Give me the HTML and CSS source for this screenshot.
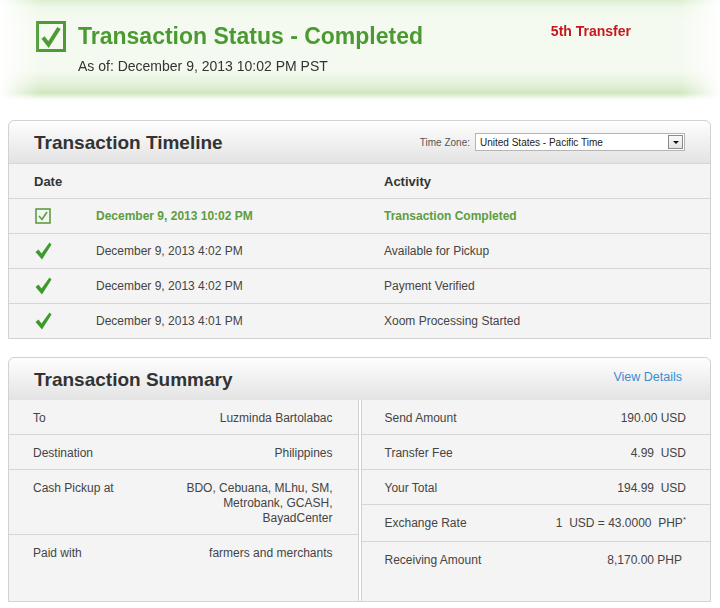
FILE: index.html
```html
<!DOCTYPE html>
<html lang="en">
<head>
    <meta charset="UTF-8">
    <title>Transaction Status</title>
    <link rel="stylesheet" href="styles.css">
</head>
<body>
    <div class="page">
        <div class="status-banner">
            <svg class="status-icon" width="30" height="31" viewBox="0 0 30 31">
                <rect x="1.5" y="1.5" width="27" height="28" fill="none" stroke="#4e9a34" stroke-width="3"/>
                <path d="M7 16.5 L12.5 23.5 L23 7" fill="none" stroke="#4e9a34" stroke-width="4" stroke-linejoin="miter"/>
            </svg>
            <div class="status-text">
                <h1>Transaction Status - Completed</h1>
                <p class="as-of">As of: December 9, 2013 10:02 PM PST</p>
            </div>
            <span class="transfer-tag">5th Transfer</span>
        </div>

        <div class="panel timeline">
            <div class="panel-head">
                <h2>Transaction Timeline</h2>
                <div class="tz">
                    <span class="tz-label">Time Zone:</span>
                    <div class="tz-select">
                        <span>United States - Pacific Time</span>
                        <span class="tz-arrow"></span>
                    </div>
                </div>
            </div>
            <div class="tl-row tl-head">
                <span class="tl-date-head">Date</span>
                <span></span>
                <span>Activity</span>
            </div>
            <div class="tl-row done">
                <span class="tl-icon">
                    <svg width="16" height="16" viewBox="0 0 16 16">
                        <rect x="1" y="1" width="14" height="14" fill="none" stroke="#5d9d41" stroke-width="1.6"/>
                        <path d="M4 8 L7 11.5 L12 4" fill="none" stroke="#5d9d41" stroke-width="1.6"/>
                    </svg>
                </span>
                <span>December 9, 2013 10:02 PM</span>
                <span>Transaction Completed</span>
            </div>
            <div class="tl-row">
                <span class="tl-icon"><svg width="17" height="18" viewBox="0 0 17 18"><path d="M0.5 10 L3.5 7.5 L6.5 11.5 L14.5 0.5 L16.5 2.5 L7 17.5 Z" fill="#3f9a2d"/></svg></span>
                <span>December 9, 2013 4:02 PM</span>
                <span>Available for Pickup</span>
            </div>
            <div class="tl-row">
                <span class="tl-icon"><svg width="17" height="18" viewBox="0 0 17 18"><path d="M0.5 10 L3.5 7.5 L6.5 11.5 L14.5 0.5 L16.5 2.5 L7 17.5 Z" fill="#3f9a2d"/></svg></span>
                <span>December 9, 2013 4:02 PM</span>
                <span>Payment Verified</span>
            </div>
            <div class="tl-row">
                <span class="tl-icon"><svg width="17" height="18" viewBox="0 0 17 18"><path d="M0.5 10 L3.5 7.5 L6.5 11.5 L14.5 0.5 L16.5 2.5 L7 17.5 Z" fill="#3f9a2d"/></svg></span>
                <span>December 9, 2013 4:01 PM</span>
                <span>Xoom Processing Started</span>
            </div>
        </div>

        <div class="panel summary">
            <div class="panel-head">
                <h2>Transaction Summary</h2>
                <a class="details-link" href="#">View Details</a>
            </div>
            <div class="summary-body">
                <div class="summary-col left">
                    <div class="sum-row"><span>To</span><span class="val">Luzminda Bartolabac</span></div>
                    <div class="sum-row"><span>Destination</span><span class="val">Philippines</span></div>
                    <div class="sum-row"><span>Cash Pickup at</span><span class="val">BDO, Cebuana, MLhu, SM,<br>Metrobank, GCASH,<br>BayadCenter</span></div>
                    <div class="sum-row last"><span>Paid with</span><span class="val">farmers and merchants</span></div>
                </div>
                <div class="summary-col right">
                    <div class="sum-row"><span>Send Amount</span><span class="val">190.00 USD</span></div>
                    <div class="sum-row"><span>Transfer Fee</span><span class="val">4.99&nbsp; USD</span></div>
                    <div class="sum-row"><span>Your Total</span><span class="val">194.99&nbsp; USD</span></div>
                    <div class="sum-row rate"><span>Exchange Rate</span><span class="val">1&nbsp; USD = 43.0000&nbsp; PHP<sup>*</sup></span></div>
                    <div class="sum-row last"><span>Receiving Amount</span><span class="val recv">8,170.00 PHP</span></div>
                </div>
            </div>
        </div>
    </div>
</body>
</html>
```

FILE: styles.css
```css
* {
    margin: 0;
    padding: 0;
    box-sizing: border-box;
}

body {
    font-family: 'Liberation Sans', Arial, sans-serif;
    color: #444;
    background: #fff;
    font-size: 12px;
}

.page {
    padding: 0 9px 0 8px;
}

/* top status banner */
.status-banner {
    margin: 0 -9px 0 -8px;
    height: 100px;
    padding: 21px 0 0 36px;
    display: flex;
    align-items: flex-start;
    background: linear-gradient(#dcefd0 0, #f0f8eb 8px, #f5faf1 22px, #f4faf0 70px, #e4f1da 84px, #d1e7c0 93px, #ffffff 100px);
    -webkit-mask-image: linear-gradient(to right, transparent 0, #000 40px, #000 680px, transparent 720px);
    mask-image: linear-gradient(to right, transparent 0, #000 40px, #000 680px, transparent 720px);
}

.status-icon {
    flex: none;
}

.status-text {
    margin-left: 12px;
}

.status-text h1 {
    font-size: 23px;
    line-height: 28px;
    color: #4b9a31;
    font-weight: bold;
    margin-top: 1px;
}

.as-of {
    margin-top: 7px;
    font-size: 14px;
    line-height: 18px;
    color: #333;
}

.transfer-tag {
    margin-left: auto;
    margin-right: 89px;
    margin-top: 2px;
    color: #c8161d;
    font-weight: bold;
    font-size: 14px;
    line-height: 17px;
}

/* panels */
.panel {
    border: 1px solid #d2d2d2;
    border-radius: 6px 6px 0 0;
    background: #f4f4f4;
    margin-top: 20px;
}

.panel.summary {
    margin-top: 18px;
}

.panel-head {
    height: 42px;
    display: flex;
    align-items: center;
    padding: 0 25px;
    border-radius: 6px 6px 0 0;
    background: linear-gradient(#fefefe, #e3e3e3);
}

.panel-head h2 {
    font-size: 19px;
    font-weight: bold;
    color: #333;
    margin-top: 1px;
}

.tz {
    margin-left: auto;
    display: flex;
    align-items: center;
    font-size: 10px;
}

.tz-label {
    color: #555;
    margin-right: 5px;
}

.tz-select {
    width: 210px;
    height: 18px;
    background: #fff;
    border: 1px solid #b5b5b5;
    display: flex;
    align-items: center;
    padding-left: 4px;
    color: #222;
}

.tz-arrow {
    margin-left: auto;
    margin-right: 1px;
    width: 15px;
    height: 14px;
    border: 1px solid #8c8c8c;
    background: linear-gradient(#fafafa, #e2e2e2);
    position: relative;
}

.tz-arrow::after {
    content: '';
    position: absolute;
    left: 4px;
    top: 5px;
    border-left: 3px solid transparent;
    border-right: 3px solid transparent;
    border-top: 3px solid #111;
}

/* timeline table */
.tl-row {
    display: grid;
    grid-template-columns: 87px 288px 1fr;
    align-items: center;
    height: 35px;
    border-top: 1px solid #d6d6d6;
}

.tl-head {
    font-size: 13px;
    font-weight: bold;
    color: #333;
}

.tl-date-head {
    padding-left: 25px;
}

.tl-icon {
    padding-left: 26px;
    display: flex;
    align-items: center;
}

.tl-row.done {
    color: #5d9d41;
    font-weight: bold;
}

/* summary */
.summary-body {
    display: grid;
    grid-template-columns: 1fr 1fr;
    column-gap: 2px;
    background: #fff;
    height: 201px;
}

.summary-col {
    background: #f4f4f4;
    display: flex;
    flex-direction: column;
}

.summary-col.left {
    border-right: 1px solid #d2d2d2;
}

.summary-col.right {
    border-left: 1px solid #d2d2d2;
}

.sum-row {
    display: flex;
    justify-content: space-between;
    align-items: flex-start;
    line-height: 15px;
    padding: 11px 25px 8px 24px;
    border-bottom: 1px solid #d6d6d6;
}

.summary-col.right .sum-row {
    padding: 11px 24px 8px 23px;
}

.summary-col.right .sum-row.rate {
    padding-top: 11px;
    padding-bottom: 10px;
}

.sum-row.last {
    flex: 1;
    border-bottom: none;
}

.val {
    text-align: right;
}

.val.recv {
    margin-right: 4px;
}

.val sup {
    font-size: 8px;
    line-height: 0;
    vertical-align: 5px;
}

.details-link {
    margin-left: auto;
    color: #3a8dd0;
    text-decoration: none;
    font-size: 12.5px;
    margin-right: 3px;
    margin-top: -4px;
}
```
